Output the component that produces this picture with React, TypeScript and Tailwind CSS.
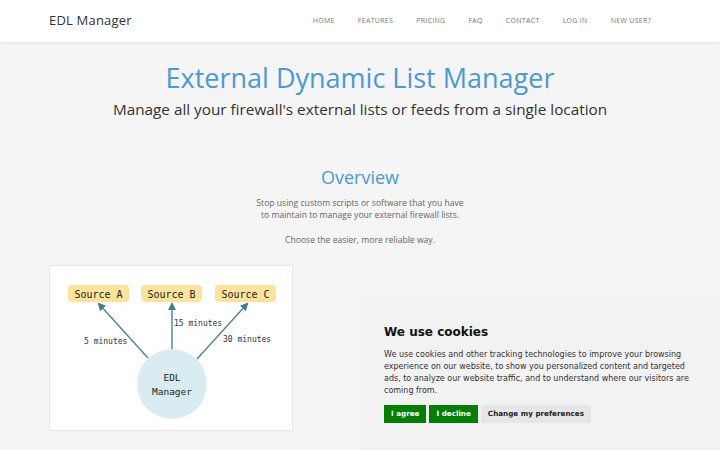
import React from "react";

// EDL Manager — landing page with cookie consent banner

const nav = ["Home", "Features", "Pricing", "FAQ", "Contact", "Log in", "New user?"];

function Diagram() {
  const mono = "'DejaVu Sans Mono', 'Liberation Mono', monospace";
  const sources = [
    { x: 18, label: "Source A" },
    { x: 91, label: "Source B" },
    { x: 165, label: "Source C" },
  ];
  return (
    <svg width="244" height="166" viewBox="0 0 244 166">
      <defs>
        <marker id="arr" markerWidth="8" markerHeight="8" refX="6" refY="4" orient="auto" markerUnits="userSpaceOnUse">
          <path d="M0,0 L8,4 L0,8 Z" fill="#3f7f8c" />
        </marker>
      </defs>
      {sources.map((s) => (
        <g key={s.label}>
          <rect x={s.x} y={19} width={61} height={17} rx={4} fill="#fde49a" />
          <text x={s.x + 30.5} y={31.5} textAnchor="middle" fontFamily={mono} fontSize="10" fill="#222">
            {s.label}
          </text>
        </g>
      ))}
      <line x1="98" y1="92" x2="49" y2="38" stroke="#4a8592" strokeWidth="1.4" markerEnd="url(#arr)" />
      <line x1="122" y1="84" x2="122" y2="38" stroke="#4a8592" strokeWidth="1.4" markerEnd="url(#arr)" />
      <line x1="147" y1="93" x2="197" y2="38" stroke="#4a8592" strokeWidth="1.4" markerEnd="url(#arr)" />
      <text x="34" y="78" fontFamily={mono} fontSize="8" fill="#333">5 minutes</text>
      <text x="124" y="60" fontFamily={mono} fontSize="8" fill="#333">15 minutes</text>
      <text x="173" y="76" fontFamily={mono} fontSize="8" fill="#333">30 minutes</text>
      <circle cx="122" cy="118" r="35" fill="#d9ecf2" />
      <text x="122" y="115" textAnchor="middle" fontFamily={mono} fontSize="9.5" fill="#222">EDL</text>
      <text x="122" y="129" textAnchor="middle" fontFamily={mono} fontSize="9.5" fill="#222">Manager</text>
    </svg>
  );
}

export default function App() {
  return (
    <div className="relative h-[450px] w-[720px] overflow-hidden bg-[#f5f5f5] font-['Open_Sans',sans-serif]">
      <header className="h-[42px] bg-white shadow-[0_1px_4px_rgba(0,0,0,0.08)] flex items-center justify-between pl-[49px] pr-[69px]">
        <span className="text-[13px] text-[#333] tracking-[0.2px]">EDL Manager</span>
        <nav className="flex gap-[23px]">
          {nav.map((n) => (
            <a key={n} className="text-[7px] uppercase tracking-[0.3px] text-[#777]">
              {n}
            </a>
          ))}
        </nav>
      </header>

      <section className="flex flex-col items-center pt-[19px]">
        <h1 className="text-[27px] leading-[34px] text-[#4a9ad4]">External Dynamic List Manager</h1>
        <p className="mt-[2px] text-[15.3px] leading-[24px] text-[#333]">
          Manage all your firewall's external lists or feeds from a single location
        </p>
      </section>

      <section className="flex flex-col items-center pt-[44px]">
        <h2 className="text-[18px] leading-[24px] text-[#4a9ad4]">Overview</h2>
        <p className="mt-[8px] text-center text-[8.6px] leading-[12px] text-[#666]">
          Stop using custom scripts or software that you have
          <br />
          to maintain to manage your external firewall lists.
        </p>
        <p className="mt-[13px] text-[8.6px] leading-[12px] text-[#666]">Choose the easier, more reliable way.</p>
      </section>

      <div className="ml-[49px] mt-[19px] w-[244px] h-[166px] bg-white border border-[#e6e6e6]">
        <Diagram />
      </div>

      <div className="absolute left-[360px] top-[297px] w-[360px] h-[153px] bg-[#f2f2f2] pl-[24px] pr-[30px] pt-[27px] font-['DejaVu_Sans',sans-serif]">
        <h3 className="text-[12px] font-bold leading-[16px] text-[#111]">We use cookies</h3>
        <p className="mt-[9px] text-[8px] leading-[12px] text-[#333]">
          We use cookies and other tracking technologies to improve your browsing experience on our website, to show you
          personalized content and targeted ads, to analyze our website traffic, and to understand where our visitors
          are coming from.
        </p>
        <div className="mt-[8px] flex gap-[3px]">
          <button className="h-[18px] px-[7px] bg-[#008000] text-white text-[7.2px] font-bold">I agree</button>
          <button className="h-[18px] px-[7px] bg-[#008000] text-white text-[7.2px] font-bold">I decline</button>
          <button className="h-[18px] px-[7px] bg-[#e6e6e6] text-[#222] text-[7.2px] font-bold">Change my preferences</button>
        </div>
      </div>
    </div>
  );
}
